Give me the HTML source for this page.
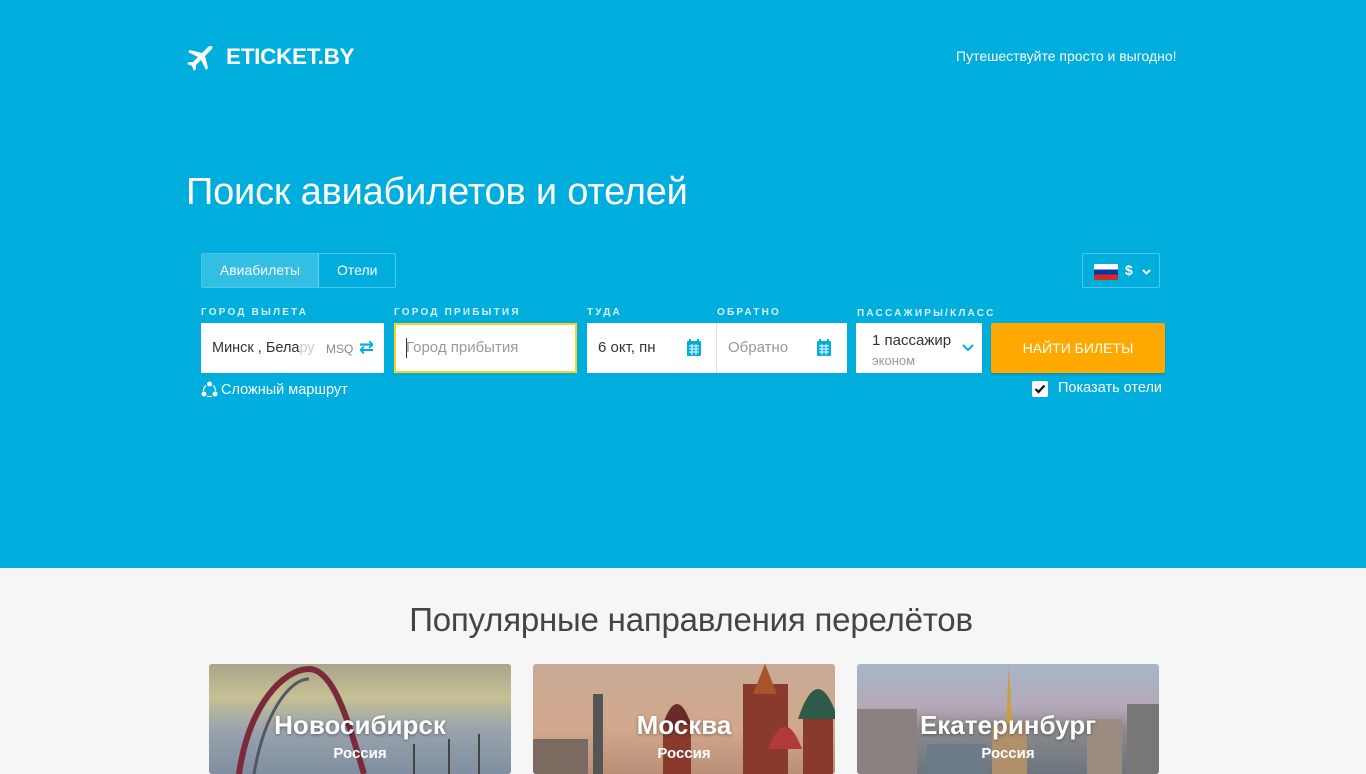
<!DOCTYPE html>
<html><head><meta charset="utf-8"><style>
*{box-sizing:border-box;margin:0;padding:0}
body{width:1366px;height:768px;overflow:hidden;font-family:"Liberation Sans","DejaVu Sans",sans-serif;background:#f6f6f6;position:relative}
.hero{position:absolute;left:0;top:0;width:1366px;height:568px;background:#00aedd;color:#fff}
.abs{position:absolute}
.logo{left:226px;top:44px;font-size:22.5px;font-weight:bold;letter-spacing:-.3px}
.tag{left:956px;top:48px;font-size:14px}
h1{position:absolute;left:186px;top:171px;font-size:38px;font-weight:normal;letter-spacing:-.2px}
.tabs{left:201px;top:253px;height:35px;border:1px solid rgba(255,255,255,.3);border-radius:2px;display:flex;font-size:14px}
.tabs div{line-height:33px;padding:0 18px}
.tabs .on{background:rgba(255,255,255,.2);border-right:1px solid rgba(255,255,255,.3);width:117px;text-align:center}
.cur{left:1082px;top:253px;width:78px;height:35px;border:1px solid rgba(255,255,255,.3);border-radius:2px}
.lbl{top:307px;font-size:10px;letter-spacing:2.2px;color:#d8f1f9;font-weight:bold}
.inp{top:323px;height:50px;background:#fff;color:#333;font-size:15px;line-height:50px}
.btn{left:991px;top:323px;width:174px;height:50px;background:#ffa800;border-radius:2px;color:#fff;text-align:center;line-height:50px;font-size:14px;box-shadow:0 2px 2px rgba(0,0,0,.15)}
.pop{position:absolute;left:8px;top:601px;width:1366px;text-align:center;font-size:33px;color:#444;font-weight:300;letter-spacing:-.2px}
.card{position:absolute;top:664px;width:302px;height:110px;border-radius:3px;overflow:hidden;color:#fff;text-align:center}
.card b{position:absolute;left:0;right:0;top:46px;font-size:26px;font-weight:bold;text-shadow:0 1px 3px rgba(0,0,0,.4)}
.card i{position:absolute;left:0;right:0;top:81px;font-size:15px;font-style:normal;font-weight:bold}
</style></head><body>
<div class="hero">
<svg class="abs" style="left:186px;top:44px" width="28" height="28" viewBox="0 0 28 28"><path d="M25 2c2 0 2 2 0 4l-6 6 3 12-2 2-5-10-5 5 0 4-2 2-2-5-5-2 2-2 4 0 5-5-10-5 2-2 12 3 6-6c1-1 2-1 3-1z" fill="#fff"/></svg>
<div class="abs logo">ETICKET.BY</div>
<div class="abs tag">Путешествуйте просто и выгодно!</div>
<h1>Поиск авиабилетов и отелей</h1>
<div class="abs tabs"><div class="on" style="padding:0">Авиабилеты</div><div>Отели</div></div>
<div class="abs cur"><div class="abs" style="left:11px;top:10px;width:24px;height:16px;background:linear-gradient(#fff 33%,#0039a6 33% 66%,#d52b1e 66%)"></div><div class="abs" style="left:42px;top:8px;font-size:14px;font-weight:bold">$</div><svg class="abs" style="left:59px;top:15px" width="9" height="6"><path d="M1 1l3.5 3.5L8 1" stroke="#fff" stroke-width="2" fill="none"/></svg></div>
<div class="abs lbl" style="left:201px">ГОРОД ВЫЛЕТА</div>
<div class="abs lbl" style="left:394px">ГОРОД ПРИБЫТИЯ</div>
<div class="abs lbl" style="left:587px">ТУДА</div>
<div class="abs lbl" style="left:717px">ОБРАТНО</div>
<div class="abs lbl" style="left:857px;top:308px">ПАССАЖИРЫ/КЛАСС</div>
<div class="abs inp" style="left:201px;width:183px;padding-left:11px;font-size:14.5px">Минск , Бела<span style="color:#ccc">ру</span><span class="abs" style="left:125px;top:1px;font-size:12px;color:#888">MSQ</span><span class="abs" style="left:158px;top:-1px;color:#00aedd;font-size:18px;font-weight:bold">⇄</span></div>
<div class="abs inp" style="left:394px;width:183px;border:2px solid #ffd21f;padding-left:10px;line-height:46px;color:#999"><span class="abs" style="left:10px;top:13px;width:1px;height:20px;background:#333"></span>Город прибытия</div>
<div class="abs inp" style="left:587px;width:130px;padding-left:11px;border-right:1px solid #ddd">6 окт, пн</div>
<div class="abs inp" style="left:717px;width:130px;padding-left:11px;color:#999">Обратно</div>
<svg class="abs" style="left:686px;top:339px" width="16" height="18"><rect x="1" y="2" width="14" height="15" rx="1" fill="#00aedd"/><path d="M3 7h10M3 10h10M3 13h10M6 5v11M10 5v11" stroke="#fff" stroke-width="1"/><rect x="3" y="0" width="2" height="4" fill="#00aedd"/><rect x="11" y="0" width="2" height="4" fill="#00aedd"/></svg>
<svg class="abs" style="left:816px;top:339px" width="16" height="18"><rect x="1" y="2" width="14" height="15" rx="1" fill="#00aedd"/><path d="M3 7h10M3 10h10M3 13h10M6 5v11M10 5v11" stroke="#fff" stroke-width="1"/><rect x="3" y="0" width="2" height="4" fill="#00aedd"/><rect x="11" y="0" width="2" height="4" fill="#00aedd"/></svg>
<div class="abs inp" style="left:856px;width:126px"><span class="abs" style="left:16px;top:-7px">1 пассажир</span><span class="abs" style="left:16px;top:13px;font-size:13px;color:#999">эконом</span><svg class="abs" style="left:106px;top:21px" width="12" height="8"><path d="M1 1l5 5 5-5" stroke="#00aedd" stroke-width="2" fill="none"/></svg></div>
<div class="abs btn">НАЙТИ БИЛЕТЫ</div>
<svg class="abs" style="left:201px;top:381px" width="17" height="17"><circle cx="8.5" cy="3" r="2.5" fill="#fff"/><circle cx="3" cy="13" r="2.5" fill="#fff"/><circle cx="14" cy="13" r="2.5" fill="#fff"/><path d="M5 4.5A6.5 6.5 0 0 0 2.5 10M12 4.5A6.5 6.5 0 0 1 14.5 10M6 15.5h5" stroke="#fff" stroke-width="1.3" fill="none"/></svg>
<div class="abs" style="left:221px;top:382px;font-size:14.5px">Сложный маршрут</div>
<div class="abs" style="left:1032px;top:381px;width:16px;height:16px;background:#fff;border-radius:2px"><svg width="16" height="16"><path d="M3.5 8l3 3 6-6.5" stroke="#111" stroke-width="2.2" fill="none"/></svg></div>
<div class="abs" style="left:1058px;top:380px;font-size:14.5px">Показать отели</div>
</div>
<div class="pop">Популярные направления перелётов</div>
<div class="card" style="left:209px;background:linear-gradient(#a8a58c,#c6c093 30%,#99a3ad 60%,#7f8ea0)"><svg class="abs" style="left:0;top:0" width="302" height="110"><path d="M30 110C40 40 75 5 100 5 125 5 140 60 155 110" stroke="#7a2a3a" stroke-width="6" fill="none"/><path d="M45 110C55 50 80 15 100 15" stroke="#556" stroke-width="3" fill="none"/><path d="M205 110v-30M240 110v-35M270 110v-40" stroke="#444" stroke-width="2"/></svg><b>Новосибирск</b><i>Россия</i></div>
<div class="card" style="left:533px;background:linear-gradient(#c8aa96,#d1a88b 60%,#b98f78)"><svg class="abs" style="left:0;top:0" width="302" height="110"><rect x="0" y="75" width="55" height="35" fill="#7a6a60"/><rect x="60" y="30" width="10" height="80" fill="#555"/><rect x="130" y="60" width="28" height="50" fill="#8a3a2a"/><path d="M130 60q14-40 28 0z" fill="#6a2a2a"/><rect x="210" y="20" width="45" height="90" fill="#8a3a2a"/><path d="M232 0l-12 30h24z" fill="#a8532a"/><path d="M235 85q17-45 34 0z" fill="#b03a3a"/><path d="M322 110q19-85 38 0z" fill="#2f5a48"/><path d="M330 100q20-80 40 0z" fill="#2e5a4a"/><rect x="270" y="50" width="30" height="60" fill="#8a3a2a"/><path d="M265 55q20-60 40 0z" fill="#2e5a4a"/></svg><b>Москва</b><i>Россия</i></div>
<div class="card" style="left:857px;background:linear-gradient(#a8b6c8,#b4a8b8 40%,#8a8a8c 60%,#6d7580)"><svg class="abs" style="left:0;top:0" width="302" height="110"><rect x="135" y="60" width="35" height="50" fill="#b0906a"/><path d="M152 0l-3 60h6z" fill="#c8a040"/><rect x="0" y="45" width="60" height="65" fill="#8a8280"/><rect x="270" y="40" width="32" height="70" fill="#777"/><rect x="230" y="55" width="35" height="55" fill="#9a8c80"/><rect x="70" y="80" width="60" height="30" fill="#6d7a88"/></svg><b>Екатеринбург</b><i>Россия</i></div>
</body></html>
